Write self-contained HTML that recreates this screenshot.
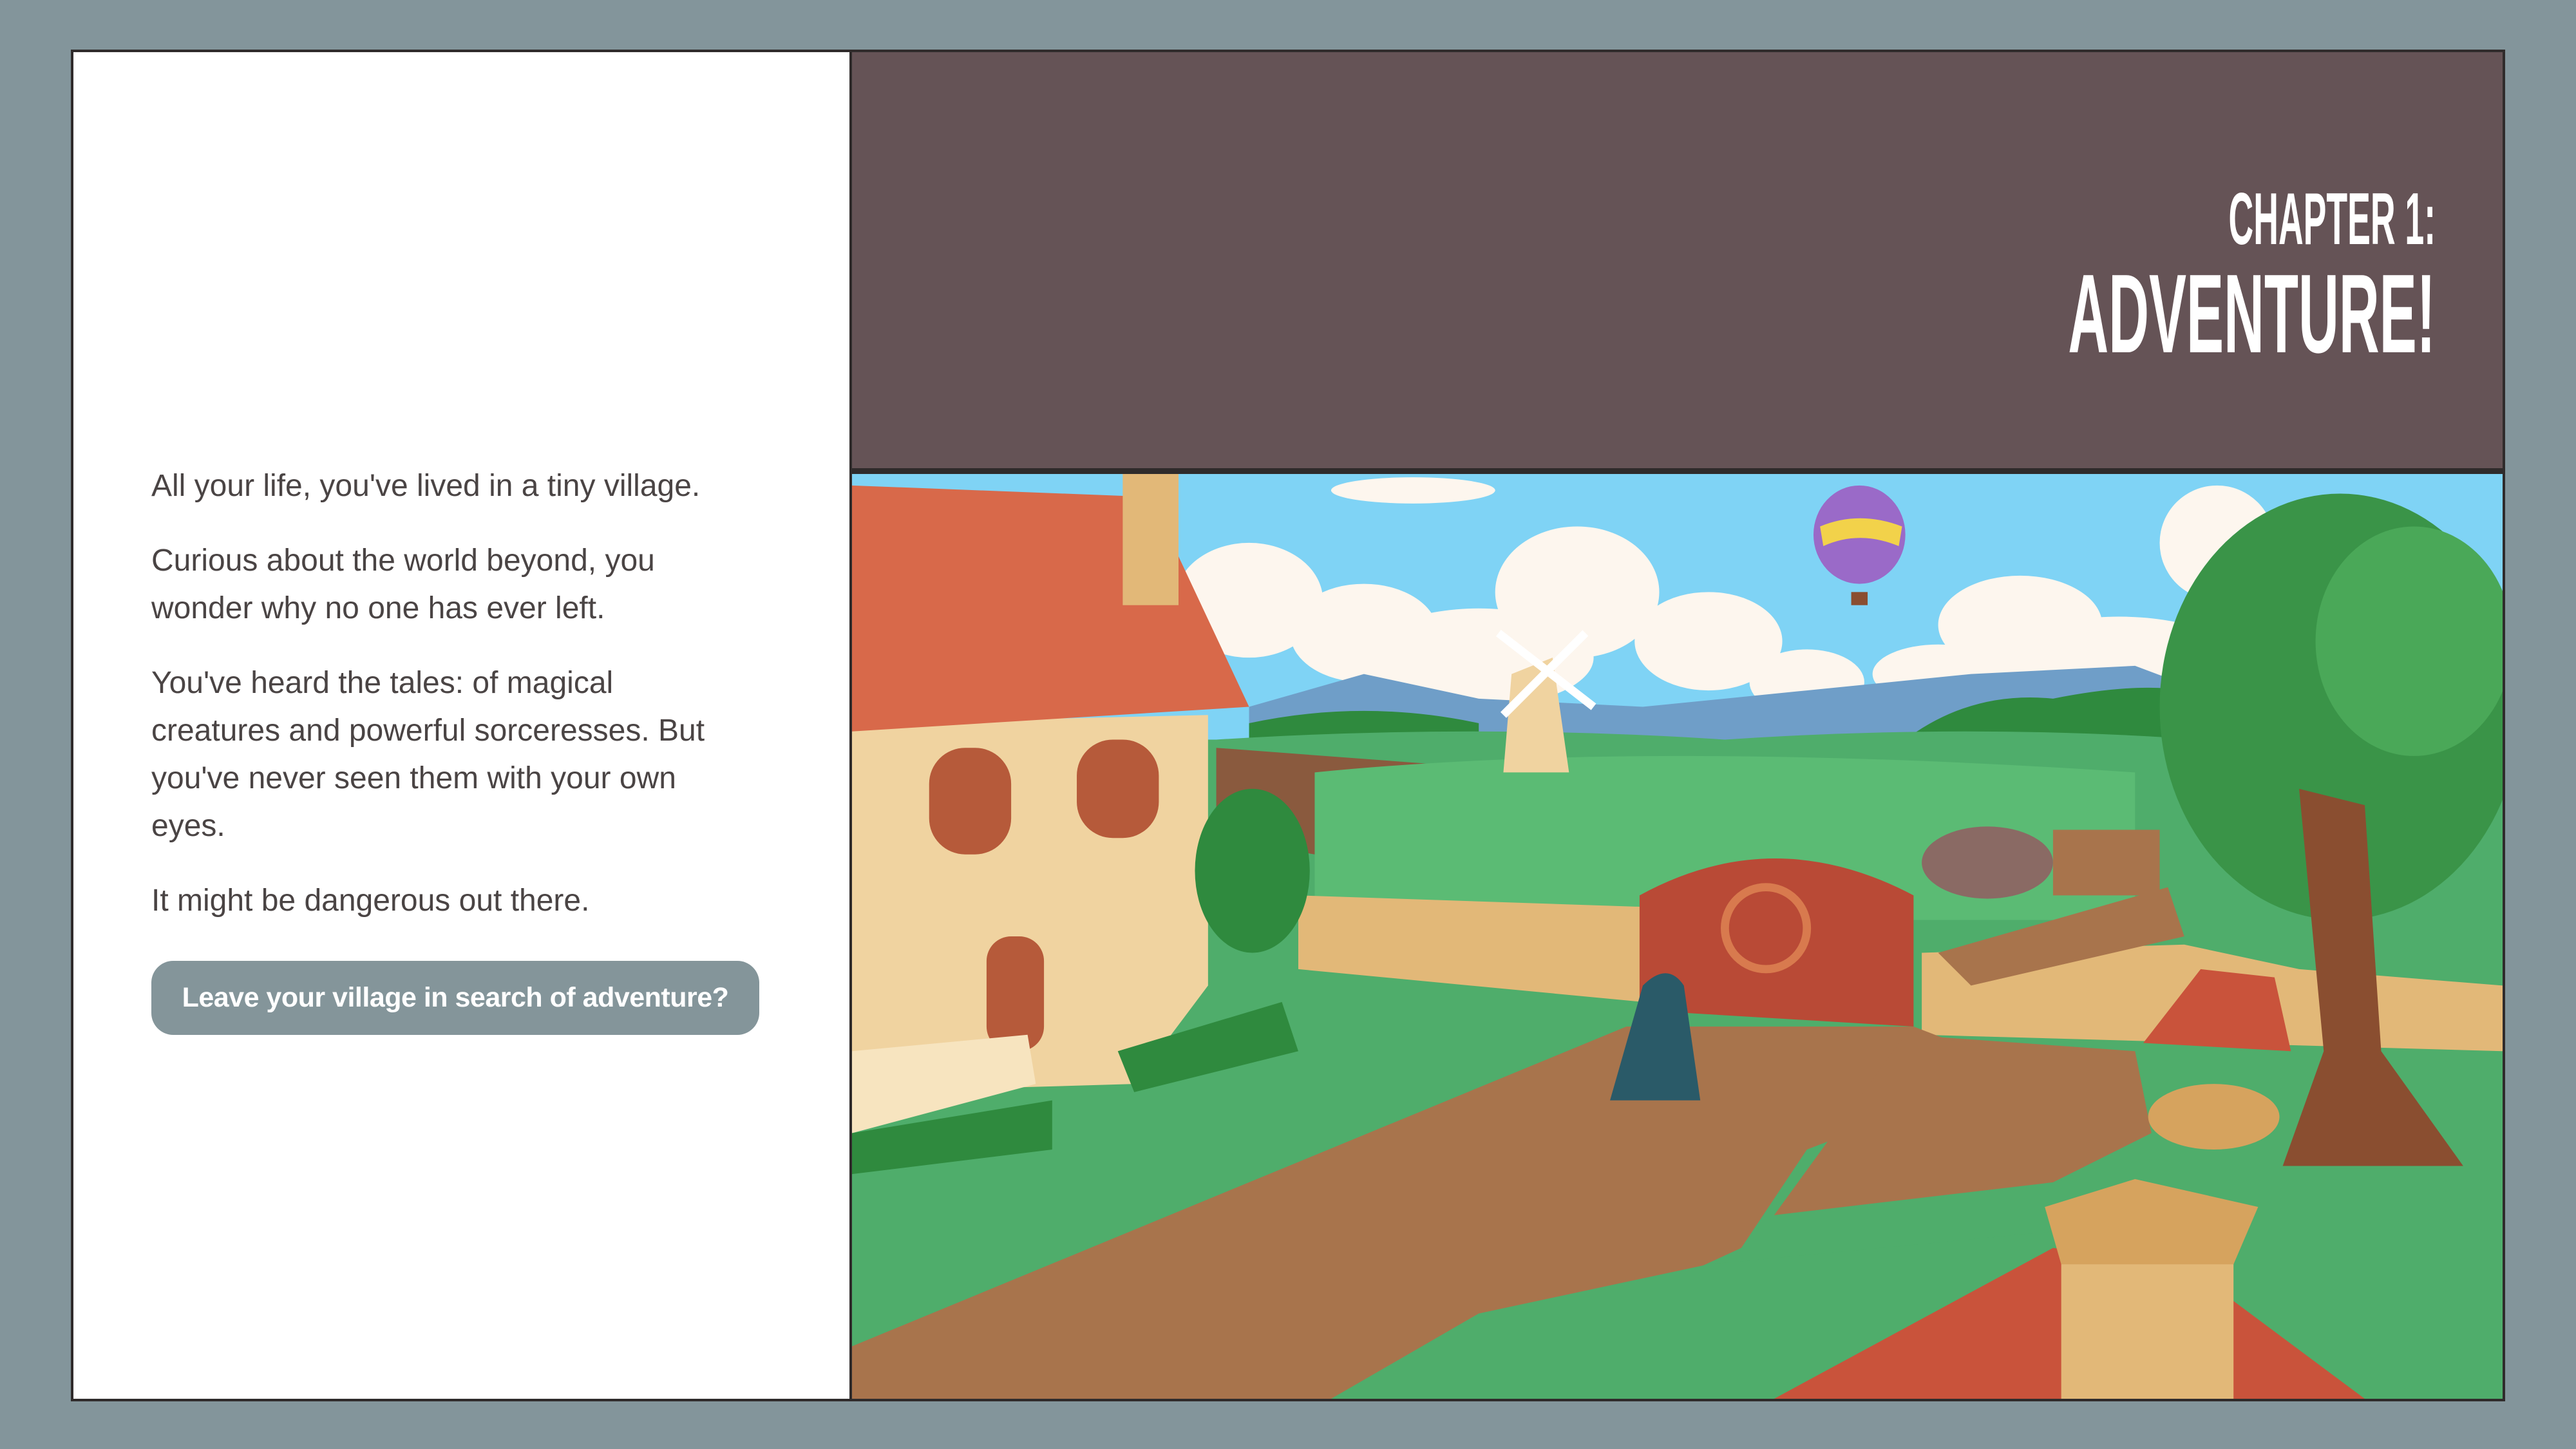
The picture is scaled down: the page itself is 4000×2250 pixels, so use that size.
<!DOCTYPE html>
<html><head><meta charset="utf-8"><style>
html,body{margin:0;padding:0}
body{width:4000px;height:2250px;background:#83959b;position:relative;overflow:hidden;font-family:"Liberation Sans",sans-serif}
.frame{position:absolute;left:110px;top:77px;width:3780px;height:2099px;background:#fff;border:4px solid #2f2b2b;box-sizing:border-box}
.left{position:absolute;left:235px;top:718px;width:900px;color:#4a4444;font-size:48px;line-height:74px}
.left p{margin:0 0 42px 0}
.btn{position:absolute;left:235px;top:1492px;width:944px;height:115px;background:#84959a;border-radius:34px;color:#fff;font-weight:bold;font-size:43px;line-height:115px;text-align:center;letter-spacing:-0.5px}
.head{position:absolute;left:1319px;top:77px;width:2571px;height:655px;background:#655356;border-left:4px solid #2f2b2b;border-top:4px solid #2f2b2b;border-right:4px solid #2f2b2b;border-bottom:5px solid #2f2b2b;box-sizing:border-box}
.t1,.t2{position:absolute;right:104px;color:#fff;font-family:"Liberation Sans Narrow","Liberation Sans",sans-serif;font-weight:bold;white-space:nowrap;transform-origin:right top;line-height:1}
.t1{top:203px;font-size:114px;transform:scaleX(0.47)}
.t2{top:319px;font-size:174px;transform:scaleX(0.5)}
.pic{position:absolute;left:1319px;top:732px;width:2571px;height:1444px;border:4px solid #2f2b2b;box-sizing:border-box;overflow:hidden}
</style></head><body>
<div class="frame"></div>
<div class="left">
<p>All your life, you've lived in a tiny village.</p>
<p>Curious about the world beyond, you wonder why no one has ever left.</p>
<p>You've heard the tales: of magical creatures and powerful sorceresses. But you've never seen them with your own eyes.</p>
<p>It might be dangerous out there.</p>
</div>
<div class="btn">Leave your village in search of adventure?</div>
<div class="head"><div class="t1">CHAPTER 1:</div><div class="t2">ADVENTURE!</div></div>
<div class="pic">
<svg width="2563" height="1436" viewBox="518 288 1006 564" preserveAspectRatio="none">
<rect x="518" y="288" width="1006" height="564" fill="#7fd3f5"/>
<g fill="#fdf6ee">
<ellipse cx="860" cy="298" rx="50" ry="8"/>
<ellipse cx="760" cy="365" rx="45" ry="35"/><ellipse cx="830" cy="385" rx="45" ry="30"/>
<ellipse cx="960" cy="360" rx="50" ry="40"/><ellipse cx="1040" cy="390" rx="45" ry="30"/>
<ellipse cx="900" cy="400" rx="70" ry="30"/><ellipse cx="1100" cy="415" rx="35" ry="20"/>
<ellipse cx="1230" cy="380" rx="50" ry="30"/><ellipse cx="1350" cy="330" rx="35" ry="35"/>
<ellipse cx="1290" cy="400" rx="70" ry="25"/><ellipse cx="1180" cy="410" rx="40" ry="18"/>
</g>
<path d="M760 430 L830 410 L900 425 L1000 430 L1100 420 L1200 410 L1300 405 L1340 420 L1340 450 L760 450Z" fill="#6f9ec8"/>
<path d="M1160 450 Q1200 420 1250 425 Q1300 415 1330 420 L1330 455 L1160 455Z" fill="#2f8a3e"/>
<path d="M760 440 Q830 425 900 440 L900 460 L760 460Z" fill="#2f8a3e"/>
<path d="M740 450 Q900 440 1050 450 Q1200 440 1340 450 L1524 460 L1524 852 L518 852 L518 450Z" fill="#4fad6b"/>
<path d="M740 455 L940 470 L900 500 L800 520 L740 510Z" fill="#8a5a3e"/>
<path d="M800 470 Q1000 450 1300 470 L1300 560 L800 560Z" fill="#5bbb74"/>
<path d="M790 545 L1000 552 L1000 610 L790 590Z" fill="#e2b878"/>
<path d="M1170 580 L1330 575 L1400 590 L1524 600 L1524 640 L1170 630Z" fill="#e2b878"/>
<path d="M998 545 Q1080 500 1165 545 L1165 625 L998 615Z" fill="#b94a36"/>
<circle cx="1075" cy="565" r="25" fill="none" stroke="#d87a4e" stroke-width="5"/>
<path d="M518 820 L760 720 L990 625 L1165 625 L1230 650 L1100 700 L1060 760 L860 852 L518 852Z" fill="#a8744c"/>
<path d="M1160 630 L1300 640 L1310 690 L1250 720 L1080 740Z" fill="#a8744c"/>
<path d="M1180 580 L1320 540 L1330 570 L1200 600Z" fill="#a8744c"/>
<path d="M810 852 L900 800 L1040 770 L1250 750 L1250 852Z" fill="#4fad6b"/>
<path d="M518 440 L735 435 L735 600 L690 660 L518 665Z" fill="#f0d3a0"/>
<path d="M518 295 L700 302 L760 430 L518 445Z" fill="#d8694a"/>
<rect x="683" y="288" width="34" height="80" fill="#e2b878"/>
<rect x="565" y="455" width="50" height="65" rx="22" fill="#b65a3a"/>
<rect x="655" y="450" width="50" height="60" rx="22" fill="#b65a3a"/>
<rect x="600" y="570" width="35" height="70" rx="15" fill="#b65a3a"/>
<path d="M518 640 L625 630 L630 660 L518 690Z" fill="#f7e4bf"/>
<path d="M518 690 L640 670 L640 700 L518 715Z" fill="#2f8a3e"/>
<ellipse cx="762" cy="530" rx="35" ry="50" fill="#2f8a3e"/>
<path d="M680 640 L780 610 L790 640 L690 665Z" fill="#2f8a3e"/>
<ellipse cx="1425" cy="430" rx="110" ry="130" fill="#3a9448"/>
<ellipse cx="1470" cy="390" rx="60" ry="70" fill="#4aa858"/>
<path d="M1400 480 L1440 490 L1450 640 L1500 710 L1390 710 L1415 640Z" fill="#8a4e30"/>
<path d="M1305 635 L1340 590 L1385 595 L1395 640Z" fill="#c9533b"/>
<ellipse cx="1348" cy="680" rx="40" ry="20" fill="#d6a35e"/>
<path d="M1080 852 L1250 760 L1330 770 L1440 852Z" fill="#c9533b"/>
<rect x="1255" y="745" width="105" height="107" fill="#e2b878"/>
<path d="M1245 735 L1300 718 L1375 735 L1360 770 L1255 770Z" fill="#d6a35e"/>
<ellipse cx="1132" cy="325" rx="28" ry="30" fill="#9a6ac8"/>
<path d="M1108 320 Q1132 310 1158 320 L1156 332 Q1132 322 1110 332Z" fill="#f2d24a"/>
<rect x="1127" y="360" width="10" height="8" fill="#8a4e30"/>
<path d="M920 410 L945 400 L955 470 L915 470Z" fill="#f0d3a0"/>
<path d="M912 385 L970 430 M965 385 L915 435" stroke="#fff" stroke-width="5"/>
<ellipse cx="1210" cy="525" rx="40" ry="22" fill="#8a6a64"/>
<rect x="1250" y="505" width="65" height="40" fill="#a8744c"/>
<path d="M1000 600 Q1015 585 1025 600 L1035 670 L980 670Z" fill="#2a5a68"/>
</svg>
</div>
</body></html>
